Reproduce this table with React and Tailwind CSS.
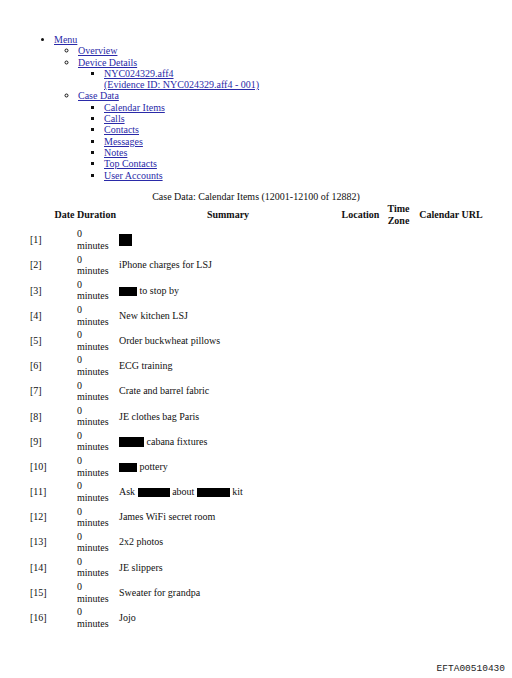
import React from 'react';

const Box = ({ w, h = 9 }) => (
  <span className="inline-block bg-black align-middle" style={{ width: w, height: h }} />
);

const rows = [
  [1, <Box w={13} h={12} />],
  [2, 'iPhone charges for LSJ'],
  [3, <><Box w={18} /> to stop by</>],
  [4, 'New kitchen LSJ'],
  [5, 'Order buckwheat pillows'],
  [6, 'ECG training'],
  [7, 'Crate and barrel fabric'],
  [8, 'JE clothes bag Paris'],
  [9, <><Box w={25} h={10} /> cabana fixtures</>],
  [10, <><Box w={18} /> pottery</>],
  [11, <>Ask <Box w={32} /> about <Box w={33} /> kit</>],
  [12, 'James WiFi secret room'],
  [13, '2x2 photos'],
  [14, 'JE slippers'],
  [15, 'Sweater for grandpa'],
  [16, 'Jojo'],
];

function Link({ children }) {
  return <a href="#" className="text-[#2a2aa8] underline">{children}</a>;
}

export default function App() {
  return (
    <div className="min-h-[678px] w-[512px] flex flex-col bg-white text-[#111] font-['Liberation_Serif',serif] text-[10px]">
      <ul className="list-disc pl-[54px] pt-[34px] leading-[11.3px]">
        <li>
          <Link>Menu</Link>
          <ul className="list-[circle] pl-[24px]">
            <li><Link>Overview</Link></li>
            <li>
              <Link>Device Details</Link>
              <ul className="list-[square] pl-[26px]">
                <li>
                  <Link>NYC024329.aff4</Link>
                  <br />
                  <Link>(Evidence ID: NYC024329.aff4 - 001)</Link>
                </li>
              </ul>
            </li>
            <li>
              <Link>Case Data</Link>
              <ul className="list-[square] pl-[26px]">
                <li><Link>Calendar Items</Link></li>
                <li><Link>Calls</Link></li>
                <li><Link>Contacts</Link></li>
                <li><Link>Messages</Link></li>
                <li><Link>Notes</Link></li>
                <li><Link>Top Contacts</Link></li>
                <li><Link>User Accounts</Link></li>
              </ul>
            </li>
          </ul>
        </li>
      </ul>

      <p className="mt-[10px] text-center leading-[11.5px]">Case Data: Calendar Items (12001-12100 of 12882)</p>

      <table className="ml-[28px] w-[459px] table-fixed border-collapse leading-[11.5px]">
        <colgroup>
          <col className="w-[25px]" />
          <col className="w-[23px]" />
          <col className="w-[41px]" />
          <col className="w-[222px]" />
          <col className="w-[43px]" />
          <col className="w-[33px]" />
          <col className="w-[72px]" />
        </colgroup>
        <thead>
          <tr className="h-[25px]">
            <th></th>
            <th className="font-bold text-center">Date</th>
            <th className="font-bold text-center">Duration</th>
            <th className="font-bold text-center">Summary</th>
            <th className="font-bold text-center">Location</th>
            <th className="font-bold text-center">Time Zone</th>
            <th className="font-bold text-center">Calendar URL</th>
          </tr>
        </thead>
        <tbody>
          {rows.map(([n, s]) => (
            <tr key={n} className="h-[25.2px]">
              <td className="pl-[2px] align-middle">[{n}]</td>
              <td></td>
              <td className="pl-[1px] py-[1px] align-middle">0<br />minutes</td>
              <td className="pl-[2px] align-middle whitespace-nowrap">{s}</td>
              <td></td>
              <td></td>
              <td></td>
            </tr>
          ))}
        </tbody>
      </table>

      <div className="mt-auto self-end pr-[7px] pb-[3px] font-['Liberation_Mono',monospace] text-[9.5px] text-[#222] leading-[12px]">
        EFTA00510430
      </div>
    </div>
  );
}
